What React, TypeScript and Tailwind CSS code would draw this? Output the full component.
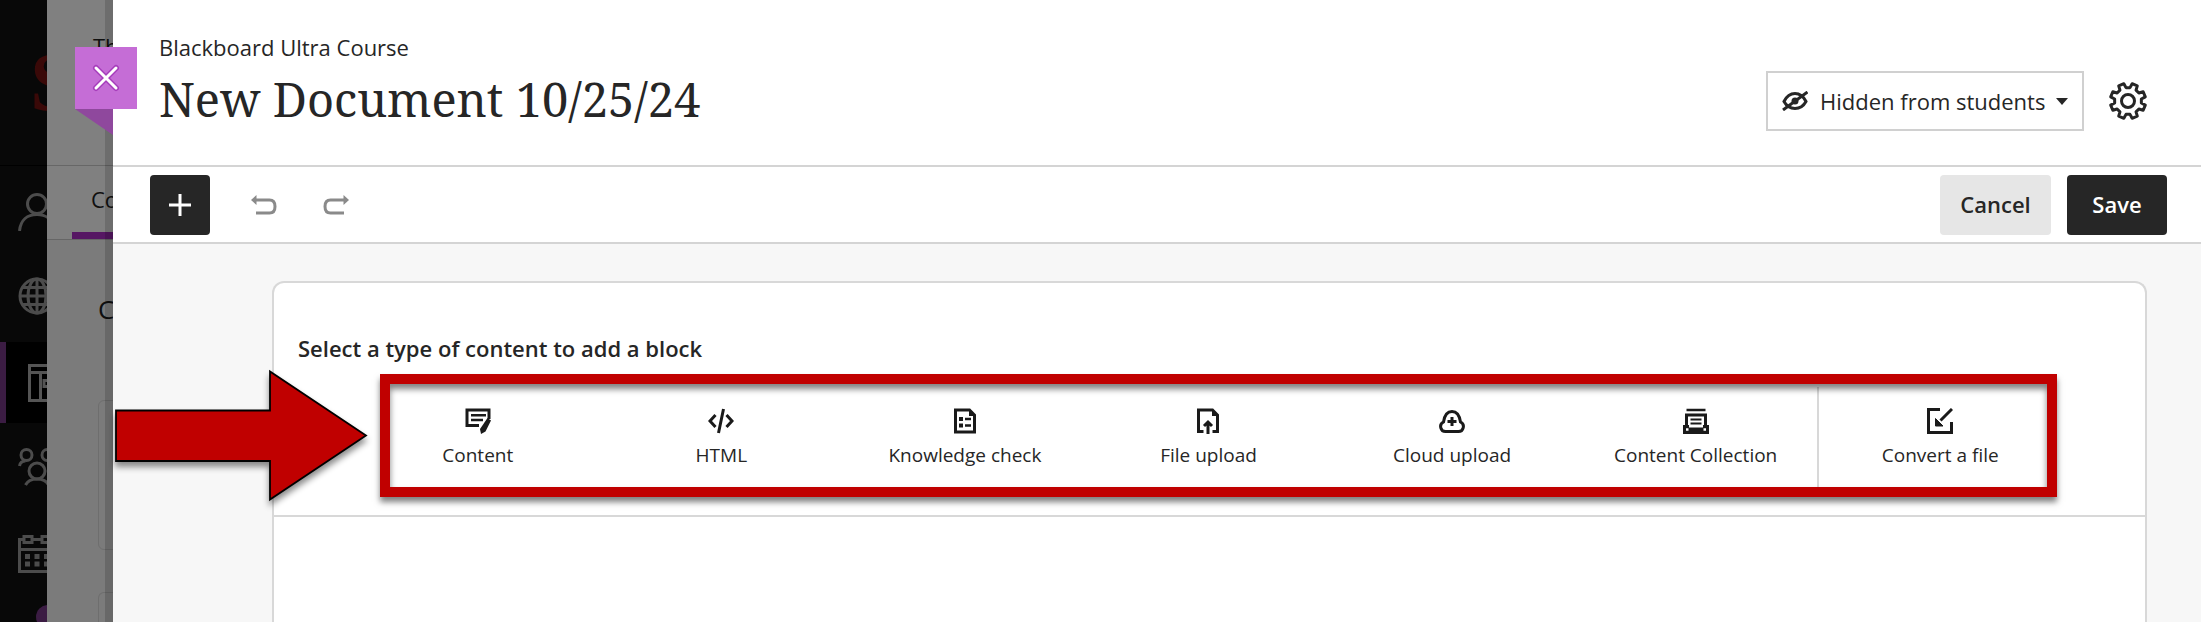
import type { ReactNode } from "react";

const ink = "#262626";

function PersonIcon() {
  return (
    <svg width="38" height="38" viewBox="0 0 38 38" fill="none" stroke="#4c4c4c" strokeWidth="3">
      <circle cx="19" cy="11" r="9.5" />
      <path d="M1.500 38c1-11 8-16.500 17.500-16.500s16.500 5.500 17.500 16.500" />
    </svg>
  );
}

function GlobeIcon() {
  return (
    <svg width="38" height="38" viewBox="0 0 38 38" fill="none" stroke="#4c4c4c" strokeWidth="3">
      <circle cx="19" cy="19" r="17" />
      <ellipse cx="19" cy="19" rx="9" ry="17" />
      <path d="M19 2v34M2 19h34M5 10.500h28M5 27.500h28" />
    </svg>
  );
}

function CoursesIcon() {
  return (
    <svg width="38" height="38" viewBox="0 0 38 38" fill="none" stroke="#555" strokeWidth="3">
      <path d="M1.500 1.500H36v35H1.500zM1.500 8.500H36M12.500 8.500v28" />
      <rect x="16" y="16.500" width="12" height="6" />
    </svg>
  );
}

function GroupsIcon() {
  return (
    <svg width="38" height="38" viewBox="0 0 38 38" fill="none" stroke="#4c4c4c" strokeWidth="3">
      <circle cx="8.500" cy="7" r="5.500" />
      <circle cx="29.500" cy="7" r="5.500" />
      <circle cx="19" cy="23" r="8" />
      <path d="M1.500 18c.5-3 2.500-5 6-5M36.500 18c-.5-3-2.500-5-6-5M7.500 37c2-4 6-6 11.500-6s9.500 2 11.500 6" />
    </svg>
  );
}

function CalendarIcon() {
  return (
    <svg width="38" height="38" viewBox="0 0 38 38" fill="none" stroke="#4c4c4c" strokeWidth="3">
      <path d="M6 4.500H1.500v32h35v-32H32M14 4.500h10M1.500 14.500h35" />
      <rect x="6" y="1.500" width="8" height="6" />
      <rect x="24" y="1.500" width="8" height="6" />
      <path d="M7 21.500h5M16.500 21.500h5M26 21.500h5M7 29h5M16.500 29h5M26 29h5" strokeWidth="5" />
    </svg>
  );
}

function UndoIcon() {
  return (
    <svg width="26" height="20" viewBox="0 0 26 20" fill="none" stroke="#8a8a8a" strokeWidth="3">
      <path d="M4 5h14.500c3.500 0 5.500 2.500 5.500 6.500s-2 6.500-5.500 6.500H5" />
      <path d="M0 5 5.500 0v10z" fill="#8a8a8a" stroke="none" />
    </svg>
  );
}

const gearPath = (() => {
  const pts: string[] = [];
  const at = (deg: number, r: number) => {
    const a = (deg * Math.PI) / 180;
    pts.push(`${(20 + r * Math.cos(a)).toFixed(2)} ${(20 + r * Math.sin(a)).toFixed(2)}`);
  };
  for (let i = 0; i < 8; i++) {
    const mid = 22.5 + i * 45;
    at(mid - 14, 13.5);
    at(mid - 9, 17.8);
    at(mid + 9, 17.8);
    at(mid + 14, 13.5);
  }
  return `M${pts.join("L")}z`;
})();

function GearIcon() {
  return (
    <svg width="40" height="40" viewBox="0 0 40 40" fill="none" stroke={ink} strokeWidth="3" strokeLinejoin="round">
      <circle cx="20" cy="20" r="6.500" />
      <path d={gearPath} />
    </svg>
  );
}

function HiddenIcon() {
  return (
    <svg width="26" height="20" viewBox="0 0 26 20" fill="none" stroke={ink} strokeWidth="3">
      <path d="M2 10.500C4.500 5.500 8.500 2.500 13 2.500s8.500 3 11 8c-2.500 4.500-6.500 7-11 7s-8.500-2.500-11-7z" />
      <circle cx="13" cy="10" r="3.500" fill={ink} stroke="none" />
      <path d="M1 19 25.500 1" />
    </svg>
  );
}

const svgProps = { width: 26, height: 26, viewBox: "0 0 26 26", fill: "none", stroke: "#1a1a1a", strokeWidth: 3 };

const blocks: { label: string; icon: ReactNode }[] = [
  {
    label: "Content",
    icon: (
      <svg {...svgProps}>
        <path d="M24 11V2H2v15.500H14" />
        <path d="M6 7.300h15M6 12h12" strokeWidth="2.500" />
        <path d="M22.500 10l3.500 2.500-5.500 11L16 26l-1-5z" fill="#1a1a1a" stroke="none" />
      </svg>
    ),
  },
  {
    label: "HTML",
    icon: (
      <svg {...svgProps}>
        <path d="M7.500 7 2 13l5.500 6M18.500 7l5.500 6-5.500 6M15.500 1l-5 24" />
      </svg>
    ),
  },
  {
    label: "Knowledge check",
    icon: (
      <svg {...svgProps}>
        <path d="M3.500 2h14l5 5v17h-19z" />
        <path d="M17 1v7h7z" fill="#1a1a1a" stroke="none" />
        <path d="M7 11h4M7 17.500h4" strokeWidth="4" />
        <path d="M13 11h6M13 17.500h6" strokeWidth="2.500" />
      </svg>
    ),
  },
  {
    label: "File upload",
    icon: (
      <svg {...svgProps}>
        <path d="M8.500 23.500h-5V2h14l5 5v16.500h-5M13 26V15M9 18l4-4 4 4" />
        <path d="M17 1v7h7z" fill="#1a1a1a" stroke="none" />
      </svg>
    ),
  },
  {
    label: "Cloud upload",
    icon: (
      <svg {...svgProps}>
        <path d="M7 23.500a5 5 0 0 1-2.500-9.500C5.500 7.500 8 3.500 13 3.500s7.500 4 8.500 10.500A5 5 0 0 1 19 23.500z" />
        <path d="M13 9v9M8.500 13.500h9" />
      </svg>
    ),
  },
  {
    label: "Content Collection",
    icon: (
      <svg {...svgProps}>
        <path d="M3.500 2h19" strokeWidth="2.500" />
        <path d="M3.500 18V7h19v11" />
        <path d="M7.500 11.500h11M7.500 15.500h11" strokeWidth="2.200" />
        <path d="M0 17h6v2.500h14V17h6v9H0z" fill="#1a1a1a" stroke="none" />
        <path d="M3 21.500h2.500M20.500 21.500H23" stroke="#fff" strokeWidth="2.500" />
      </svg>
    ),
  },
  {
    label: "Convert a file",
    icon: (
      <svg {...svgProps}>
        <path d="M13 1.500H1.500v23h23V14M25 1 13.500 12.500" />
        <path d="M8.500 10.500v7.500H16z" fill="#1a1a1a" stroke="#1a1a1a" strokeWidth="1" />
      </svg>
    ),
  },
];

function Sidebar() {
  return (
    <nav aria-label="Main" className="flex w-[47px] shrink-0 flex-col overflow-hidden bg-[#080808] *:shrink-0 [&_svg]:shrink-0">
      <div className="flex h-[166px] items-center border-b border-black pl-[30px] font-['Liberation_Serif',serif] text-[84px] leading-none font-bold text-[#3a0908]">
        <span>S</span>
      </div>
      <a href="#profile" aria-label="Profile" className="flex h-[92px] items-center pl-[18px]"><PersonIcon /></a>
      <a href="#institution" aria-label="Institution" className="flex h-[84px] items-center pb-2 pl-[18px]"><GlobeIcon /></a>
      <a href="#courses" aria-label="Courses" className="flex h-[81px] items-center border-l-6 border-[#3b1c43] bg-black pl-[22px]"><CoursesIcon /></a>
      <a href="#organizations" aria-label="Organizations" className="flex h-[88px] items-center pl-[18px]"><GroupsIcon /></a>
      <a href="#calendar" aria-label="Calendar" className="flex h-[86px] items-center pl-[18px]"><CalendarIcon /></a>
      <div className="mt-2 ml-9 h-6 w-6 rounded-full bg-[#3b1c43]" />
    </nav>
  );
}

function CoursePage() {
  return (
    <div className="relative flex w-[66px] shrink-0 flex-col overflow-hidden bg-[#7b7b7b] whitespace-nowrap text-[#0f0f0f] *:shrink-0">
      <div className="h-[166px] border-b border-[#676767] bg-[#808080] pt-[30px] pl-[46px] text-[22px]">Th</div>
      <div className="flex h-[74px] flex-col border-b border-[#666] bg-[#808080] pl-[25px]">
        <div className="flex h-[66px] items-center pl-[19px] text-[22px] font-medium">Co</div>
        <div className="h-[7px] bg-[#561763]" />
      </div>
      <div className="h-40 pt-[50px] pl-[51px] text-[26px] font-medium">C</div>
      <div className="ml-[51px] h-[150px] w-40 rounded-md border border-[#6e6e6e]" />
      <div className="mt-[42px] ml-[51px] h-12 w-40 rounded-t-md border border-b-0 border-[#6e6e6e]" />
      <div className="absolute inset-y-0 right-0 w-2 bg-black/15" />
    </div>
  );
}

export default function App() {
  return (
    <div className="relative flex min-h-screen overflow-hidden font-['Open_Sans','Noto_Sans',sans-serif] text-[#262626]">
      <div className="flex max-h-screen"><Sidebar /><CoursePage /></div>

      <main className="flex min-w-0 flex-1 flex-col bg-white">
        <header className="flex h-[167px] items-start justify-between border-b-2 border-[#d4d4d4] pr-[53px] pl-[46px]">
          <div className="pt-[31px]">
            <p className="text-[22px] leading-8">Blackboard Ultra Course</p>
            <h1 className="mt-1 font-['Noto_Serif','DejaVu_Serif_Condensed','DejaVu_Serif',serif] text-[47px] leading-[64px]">New Document 10/25/24</h1>
          </div>
          <div className="flex items-center gap-6 pt-[71px]">
            <div className="flex h-[60px] items-center border-2 border-[#d0d0d0] px-[14px]">
              <HiddenIcon />
              <select aria-label="Visibility" className="ml-3 appearance-none bg-transparent text-[22px]">
                <option>Hidden from students</option>
              </select>
              <svg className="ml-[10px]" width="12" height="7" viewBox="0 0 12 7"><path d="M0 0h12L6 7z" fill={ink} /></svg>
            </div>
            <button aria-label="Settings"><GearIcon /></button>
          </div>
        </header>

        <div className="flex h-[77px] items-center justify-between border-b-2 border-[#d4d4d4] pr-[34px] pl-[37px]">
          <div className="flex items-center">
            <button aria-label="Add" className="flex size-[60px] items-center justify-center rounded bg-[#262626]">
              <svg width="24" height="24" viewBox="0 0 24 24" stroke="#fff" strokeWidth="3"><path d="M12 1v22M1 12h22" /></svg>
            </button>
            <button aria-label="Undo" className="ml-[41px]"><UndoIcon /></button>
            <button aria-label="Redo" className="ml-[46px] -scale-x-100"><UndoIcon /></button>
          </div>
          <div className="flex gap-4 text-[22px] font-semibold">
            <button className="h-[60px] w-[111px] rounded bg-[#e6e6e6]">Cancel</button>
            <button className="h-[60px] w-[100px] rounded bg-[#262626] text-white">Save</button>
          </div>
        </div>

        <div className="flex flex-1 flex-col bg-[#f7f7f7] pt-[37px] pr-[54px] pl-[159px]">
          <section className="flex-1 rounded-t-xl border-2 border-b-0 border-[#d8d8d8] bg-white">
            <div className="border-b-2 border-[#d8d8d8] pb-7">
              <h2 className="pt-[49px] pl-6 text-[22px] leading-8 font-semibold">Select a type of content to add a block</h2>
              <div className="relative mt-[23px] mr-[84px] ml-[82px] grid h-[100px] grid-cols-7">
                {blocks.map((b) => (
                  <button
                    key={b.label}
                    className="flex flex-col items-center gap-[7px] border-[#d8d8d8] pt-[21px] text-[19px] leading-7 last-of-type:border-l-2"
                  >
                    {b.icon}
                    {b.label}
                  </button>
                ))}
                <div className="pointer-events-none absolute -top-[13px] right-1 -bottom-[10px] left-6 border-10 border-[#c00000] shadow-[0_5px_6px_rgba(0,0,0,0.5),inset_0_5px_6px_rgba(0,0,0,0.5)]" />
              </div>
            </div>
          </section>
        </div>
      </main>

      <svg className="absolute top-[105px] left-[75px]" width="38" height="30" viewBox="0 0 38 30"><path d="M0 4h38v26z" fill="#8f489d" /></svg>
      <button aria-label="Close" className="absolute top-[47px] left-[75px] flex size-[62px] items-center justify-center bg-[#c56dd6]">
        <svg width="30" height="30" viewBox="0 0 30 30" strokeLinecap="round">
          <path d="M5 5l20 20M25 5 5 25" stroke="#a63dbb" strokeWidth="6" />
          <path d="M5 5l20 20M25 5 5 25" stroke="#fff" strokeWidth="3" />
        </svg>
      </button>
      <svg className="absolute top-[365px] left-[110px] drop-shadow-[0_5px_3px_rgba(0,0,0,0.45)]" width="264" height="146" viewBox="110 365 264 146">
        <path d="M116 410.500H270V371.500L366 435.500 270 499.500V461H116z" fill="#c00000" stroke="#000" strokeWidth="1.800" />
      </svg>
    </div>
  );
}
